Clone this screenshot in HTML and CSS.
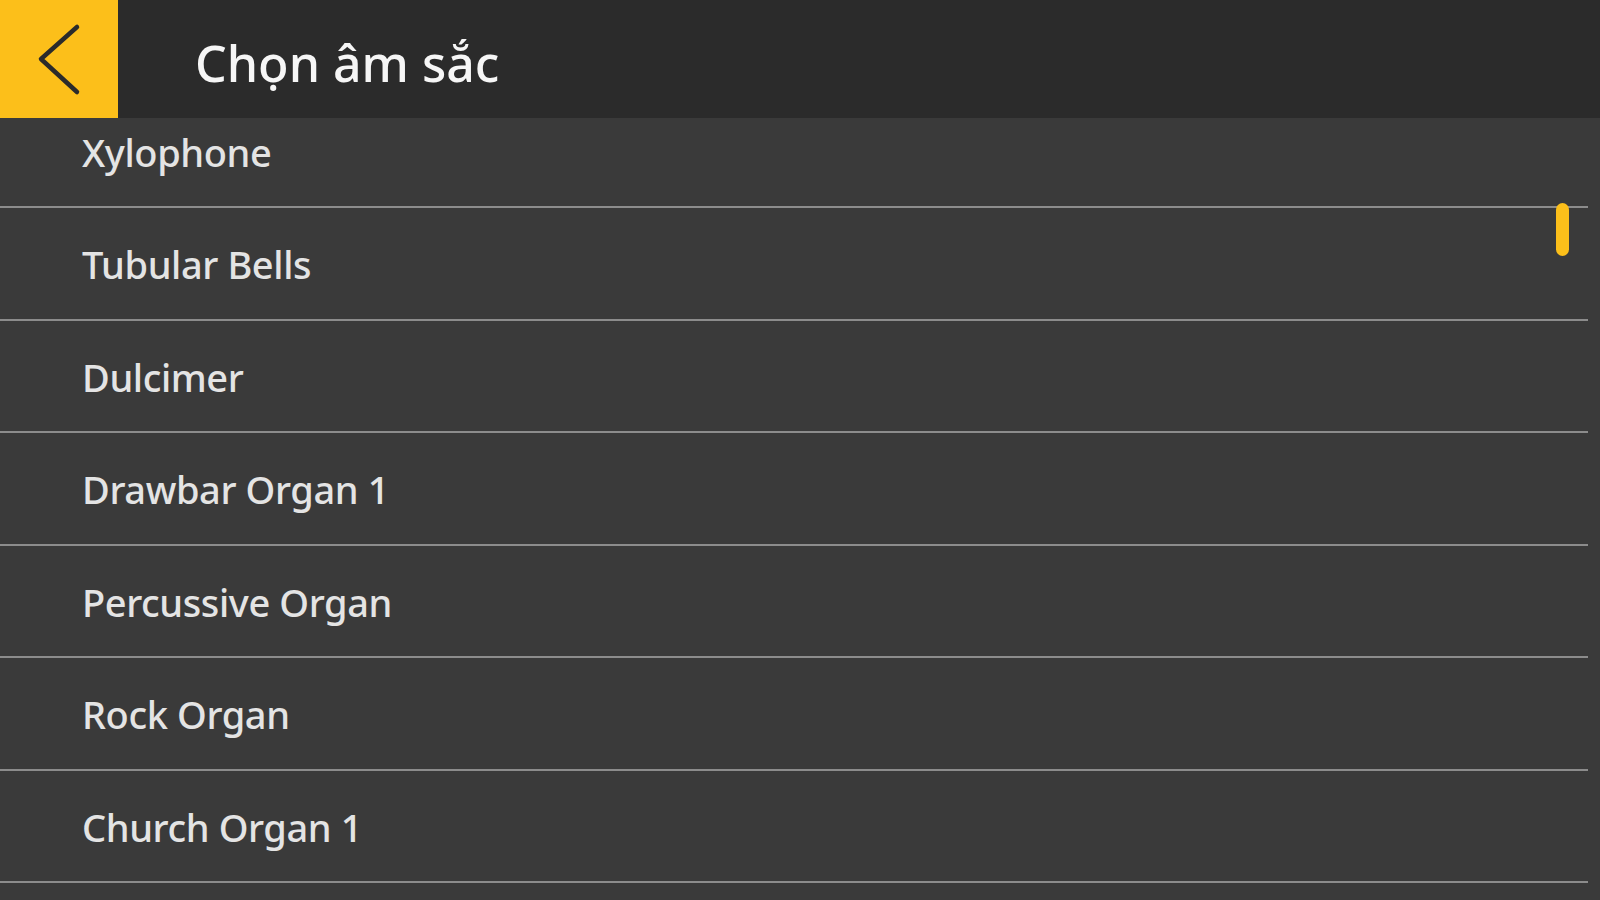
FILE: index.html
```html
<!DOCTYPE html>
<html lang="vi">
<head>
<meta charset="utf-8">
<title>Chọn âm sắc</title>
<link rel="stylesheet" href="styles.css">
</head>
<body>
<div class="app">
  <header class="topbar">
    <button class="back" aria-label="Back">
      <svg width="118" height="118" viewBox="0 0 118 118">
        <polyline points="77,27 41,59 77,92" fill="none" stroke="#2b2b2b" stroke-width="4.5" stroke-linecap="round" stroke-linejoin="round"/>
      </svg>
    </button>
    <h1 class="title">Chọn âm sắc</h1>
  </header>
  <main class="list-wrap">
    <ul class="list">
      <li class="item">Xylophone</li>
      <li class="item">Tubular Bells</li>
      <li class="item">Dulcimer</li>
      <li class="item">Drawbar Organ 1</li>
      <li class="item">Percussive Organ</li>
      <li class="item">Rock Organ</li>
      <li class="item">Church Organ 1</li>
    </ul>
    <div class="scroll-thumb"></div>
  </main>
</div>
</body>
</html>
```
FILE: styles.css
```css
* { box-sizing: border-box; }
html, body {
  margin: 0;
  padding: 0;
  width: 1600px;
  height: 900px;
  overflow: hidden;
  background: #3a3a3a;
  font-family: "Noto Sans", "Open Sans", sans-serif;
}
.app {
  display: flex;
  flex-direction: column;
  height: 900px;
}
.topbar {
  height: 118px;
  flex: none;
  display: flex;
  align-items: center;
  background: #2b2b2b;
}
.back {
  width: 118px;
  height: 118px;
  padding: 0;
  border: 0;
  background: #fcbf1a;
  display: block;
}
.back svg { display: block; }
.title {
  margin: 0 0 0 77px;
  padding-top: 8px;
  font-size: 50px;
  font-weight: 500;
  color: #f6f6f6;
  line-height: 1;
}
.list-wrap {
  position: relative;
  flex: 1;
  overflow: hidden;
  background: #3a3a3a;
}
.list {
  list-style: none;
  margin: -22.5px 0 0 0;
  padding: 0;
}
.item {
  height: 112.5px;
  margin-right: 12px;
  border-bottom: 2px solid #8c8c8c;
  display: flex;
  align-items: center;
  padding-left: 82px;
  padding-top: 2px;
  font-size: 38px;
  letter-spacing: -0.4px;
  font-weight: 500;
  color: #e4e4e4;
}
.scroll-thumb {
  position: absolute;
  left: 1556px;
  top: 85px;
  width: 13px;
  height: 53px;
  border-radius: 7px;
  background: #fcbf1a;
}
```
